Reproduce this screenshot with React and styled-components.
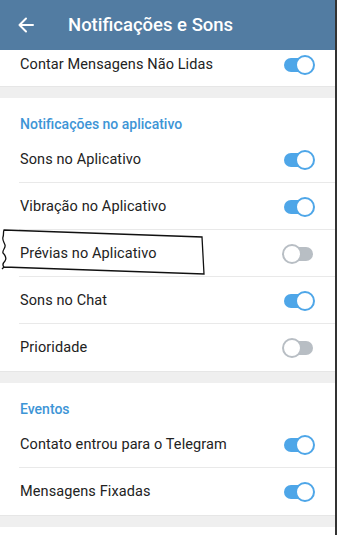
import React from 'react'
import styled, { createGlobalStyle } from 'styled-components'

const GlobalStyle = createGlobalStyle`
  html, body {
    margin: 0;
    padding: 0;
    background: #ffffff;
  }
  body {
    font-family: Roboto, "Noto Sans", Arial, sans-serif;
    -webkit-font-smoothing: antialiased;
  }
`

const sections = [
  {
    title: 'Notificações no aplicativo',
    items: [
      { label: 'Sons no Aplicativo', on: true },
      { label: 'Vibração no Aplicativo', on: true },
      { label: 'Prévias no Aplicativo', on: false, marked: true },
      { label: 'Sons no Chat', on: true },
      { label: 'Prioridade', on: false },
    ],
  },
  {
    title: 'Eventos',
    items: [
      { label: 'Contato entrou para o Telegram', on: true },
      { label: 'Mensagens Fixadas', on: true },
    ],
  },
]

function Toggle({ on }) {
  return (
    <Switch>
      <Track $on={on} />
      <Knob $on={on} />
    </Switch>
  )
}

function Mark() {
  return (
    <MarkSvg width="210" height="50" viewBox="0 0 210 50">
      <path
        d="M4 2 L202 9 L204 46 L4 39 C2 37 3 35 5 33 C7 30 5 27 3 25 C2 22 6 20 5 17 C4 14 2 12 3 9 C4 6 3 4 4 2 Z M4 39 L2 41"
        fill="none"
        stroke="#111"
        strokeWidth="1.3"
      />
    </MarkSvg>
  )
}

function Row({ label, on, marked, last }) {
  return (
    <Item>
      {marked && <Mark />}
      <Label>{label}</Label>
      <Toggle on={on} />
      {!last && <Divider />}
    </Item>
  )
}

export default function App() {
  return (
    <>
      <GlobalStyle />
      <Frame>
        <Header>
          <Back width="16" height="16" viewBox="0 0 16 16">
            <path d="M15 8 H1.5 M8 1.5 L1.5 8 L8 14.5" fill="none" stroke="#fff" strokeWidth="2" strokeLinecap="round" strokeLinejoin="round" />
          </Back>
          <Title>Notificações e Sons</Title>
        </Header>

        <Clipped>
          <Item $shift>
            <Label>Contar Mensagens Não Lidas</Label>
            <Toggle on />
          </Item>
        </Clipped>

        {sections.map((section) => (
          <React.Fragment key={section.title}>
            <Gap />
            <Section>
              <SectionTitle>{section.title}</SectionTitle>
              {section.items.map((item, i) => (
                <Row key={item.label} {...item} last={i === section.items.length - 1} />
              ))}
            </Section>
          </React.Fragment>
        ))}
        <Gap />
        <Tail />
      </Frame>
    </>
  )
}

const Frame = styled.div`
  width: 335px;
  border-right: 2px solid #333;
  border-bottom: 2px solid #333;
  background: #fff;
  overflow: hidden;
`

const Header = styled.div`
  height: 50px;
  background: #527ca2;
  display: flex;
  align-items: center;
  padding-left: 18px;
  box-sizing: border-box;
`

const Back = styled.svg`
  flex: none;
`

const Title = styled.div`
  margin-left: 34px;
  color: #fff;
  font-size: 18.5px;
  font-weight: 500;
`

const Clipped = styled.div`
  height: 36px;
  overflow: hidden;
  background: #fff;
`

const Gap = styled.div`
  height: 11px;
  background: #efefef;
  border-top: 1px solid #e6e6e6;
`

const Section = styled.div`
  background: #fff;
`

const SectionTitle = styled.div`
  height: 38px;
  box-sizing: border-box;
  padding: 18px 20px 0;
  color: #3d95d6;
  font-size: 14px;
  font-weight: 500;
  line-height: 16px;
`

const Item = styled.div`
  position: relative;
  height: 47px;
  margin-top: ${(p) => (p.$shift ? '-9px' : '0')};
  display: flex;
  align-items: center;
  justify-content: space-between;
  padding: 0 20px 0 20px;
  box-sizing: border-box;
`

const Label = styled.div`
  color: #222;
  font-size: 14.5px;
  letter-spacing: 0.1px;
`

const Divider = styled.div`
  position: absolute;
  left: 19px;
  right: 0;
  bottom: 0;
  height: 1px;
  background: #e9e9e9;
`

const MarkSvg = styled.svg`
  position: absolute;
  left: 0;
  top: -2px;
  pointer-events: none;
`

const Tail = styled.div`
  height: 8px;
  background: #fff;
`

const Switch = styled.div`
  position: relative;
  width: 33px;
  height: 20px;
  flex: none;
`

const Track = styled.div`
  position: absolute;
  left: 2px;
  top: 3px;
  width: 29px;
  height: 14px;
  border-radius: 7px;
  background: ${(p) => (p.$on ? '#4ea6e8' : '#b8bec4')};
`

const Knob = styled.div`
  position: absolute;
  top: 0;
  left: ${(p) => (p.$on ? '13px' : '0')};
  width: 16px;
  height: 16px;
  border-radius: 50%;
  background: #fff;
  border: 2px solid ${(p) => (p.$on ? '#4ea6e8' : '#b8bec4')};
`
